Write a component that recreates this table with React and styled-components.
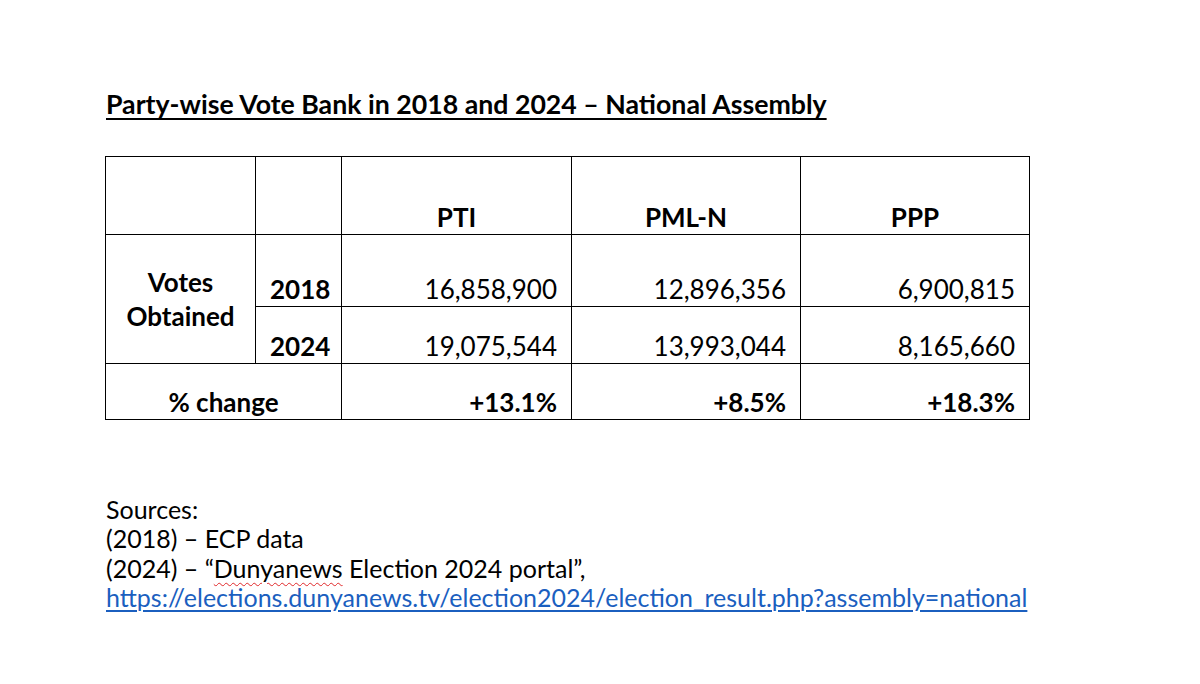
import React from "react"
import styled, { createGlobalStyle } from "styled-components"

const GlobalStyle = createGlobalStyle`
  html, body {
    margin: 0;
    padding: 0;
    background: #ffffff;
  }
  body {
    font-family: Lato, "Open Sans", sans-serif;
    color: #000000;
  }
`

const StyledPage = styled.div`
  width: 1200px;
  height: 684px;
  box-sizing: border-box;
  padding: 88px 0 0 106px;
  display: flex;
  flex-direction: column;
`

const StyledTitle = styled.h1`
  margin: 0;
  font-size: 26.7px;
  font-weight: 700;
  line-height: 32px;
  text-decoration: underline;
  text-decoration-thickness: 2px;
  text-underline-offset: 4px;
`

const StyledTable = styled.table`
  margin-top: 36px;
  margin-left: -1px;
  border-collapse: collapse;
  table-layout: fixed;
  width: 924px;
  font-size: 26px;
`

const StyledRow = styled.tr`
  height: ${(p) => p.$height}px;
`

const StyledCell = styled.td`
  border: 1.5px solid #000000;
  padding: 0 14px 0;
  vertical-align: ${(p) => (p.$middle ? "middle" : "bottom")};
  text-align: ${(p) => p.$align || "right"};
  font-weight: ${(p) => (p.$bold ? 700 : 400)};
  line-height: 34px;
  white-space: nowrap;
`

const StyledSources = styled.div`
  margin-top: 75px;
  font-size: 25px;
  line-height: 29.3px;
`

const StyledSpell = styled.span`
  text-decoration: underline wavy #e0282a;
  text-decoration-thickness: 1px;
  text-underline-offset: 4px;
`

const StyledLink = styled.a`
  color: #1b5fbf;
  text-decoration: underline;
  text-decoration-thickness: 1.5px;
  text-underline-offset: 3px;
`

const rows = [
  ["2018", "16,858,900", "12,896,356", "6,900,815"],
  ["2024", "19,075,544", "13,993,044", "8,165,660"],
]

const App = () => (
  <>
    <GlobalStyle />
    <StyledPage>
      <StyledTitle>Party-wise Vote Bank in 2018 and 2024 – National Assembly</StyledTitle>
      <StyledTable>
        <colgroup>
          <col style={{ width: 150 }} />
          <col style={{ width: 86 }} />
          <col style={{ width: 230 }} />
          <col style={{ width: 229 }} />
          <col style={{ width: 229 }} />
        </colgroup>
        <tbody>
          <StyledRow $height={78}>
            <StyledCell />
            <StyledCell />
            <StyledCell $align="center" $bold>PTI</StyledCell>
            <StyledCell $align="center" $bold>PML-N</StyledCell>
            <StyledCell $align="center" $bold>PPP</StyledCell>
          </StyledRow>
          {rows.map(([year, ...votes], i) => (
            <StyledRow key={year} $height={i === 0 ? 72 : 57}>
              {i === 0 && (
                <StyledCell rowSpan={2} $align="center" $bold $middle>
                  Votes
                  <br />
                  Obtained
                </StyledCell>
              )}
              <StyledCell $align="center" $bold>{year}</StyledCell>
              {votes.map((v) => (
                <StyledCell key={v}>{v}</StyledCell>
              ))}
            </StyledRow>
          ))}
          <StyledRow $height={56}>
            <StyledCell colSpan={2} $align="center" $bold>% change</StyledCell>
            <StyledCell $bold>+13.1%</StyledCell>
            <StyledCell $bold>+8.5%</StyledCell>
            <StyledCell $bold>+18.3%</StyledCell>
          </StyledRow>
        </tbody>
      </StyledTable>
      <StyledSources>
        Sources:
        <br />
        (2018) – ECP data
        <br />
        (2024) – “<StyledSpell>Dunyanews</StyledSpell> Election 2024 portal”,
        <br />
        <StyledLink href="#">https://elections.dunyanews.tv/election2024/election_result.php?assembly=national</StyledLink>
      </StyledSources>
    </StyledPage>
  </>
)

export default App
